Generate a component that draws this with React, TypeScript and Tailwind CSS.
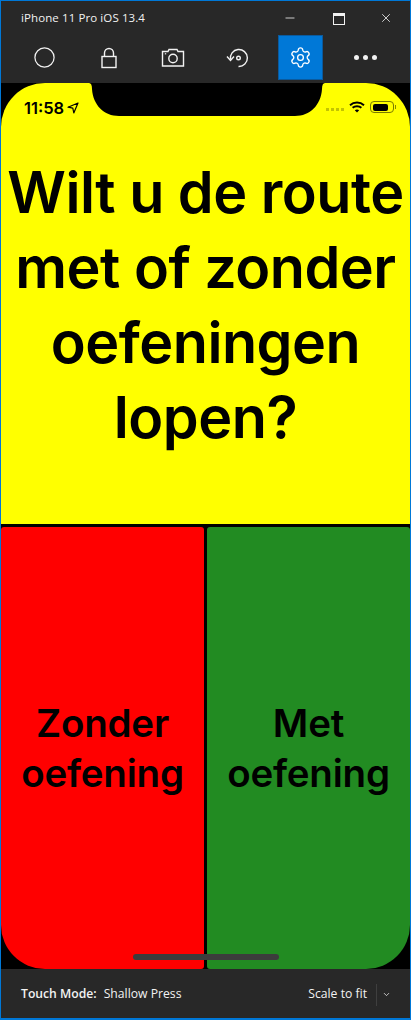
import React from 'react';
import { Circle, Settings, ChevronDown, Minus, X } from 'lucide-react';

const FONT = 'font-["Inter","Liberation_Sans",sans-serif]';

const ToolButton: React.FC<{ active?: boolean; children: React.ReactNode }> = ({ active, children }) => (
  <div className={`w-[45px] h-[45px] flex items-center justify-center ${active ? 'bg-[#0078d7] border border-[#0a5a9e]' : ''}`}>{children}</div>
);

const LockIcon = () => (
  <svg width="24" height="24" viewBox="0 0 24 24" fill="none" stroke="#f2f2f2" strokeWidth="1.4">
    <rect x="5" y="10.5" width="14" height="11" />
    <path d="M7.5 10.5 V7 A4.5 4.5 0 0 1 16.5 7 V10.5" />
  </svg>
);

const CameraIcon = () => (
  <svg width="24" height="24" viewBox="0 0 24 24" fill="none" stroke="#f2f2f2" strokeWidth="1.4">
    <path d="M1.5 5.5 H7 L8 3.5 H16 L17 5.5 H22.5 V20 H1.5 Z" />
    <circle cx="12" cy="12.5" r="4.2" />
    <rect x="3.8" y="7.2" width="1.4" height="1.2" fill="#f2f2f2" stroke="none" />
  </svg>
);

const RotateIcon = () => (
  <svg width="24" height="24" viewBox="0 0 24 24" fill="none" stroke="#f2f2f2" strokeWidth="1.4">
    <path d="M5.5 13.5 A8.5 8.5 0 1 1 13.5 20.5" />
    <path d="M2 10.5 L5.5 14.5 L9 10.5" />
    <circle cx="13.5" cy="12" r="1.8" />
  </svg>
);

const Wifi = () => (
  <svg width="16" height="12" viewBox="0 0 16 12" fill="none" stroke="#000" strokeWidth="2">
    <path d="M1 4.2 C5 0.6 11 0.6 15 4.2" />
    <path d="M3.6 6.8 C6 4.8 10 4.8 12.4 6.8" />
    <path d="M8 11.5 L5.8 9.2 C7 8.2 9 8.2 10.2 9.2 Z" fill="#000" stroke="none" />
  </svg>
);

const Arrow = () => (
  <svg width="12" height="12" viewBox="0 0 12 12" fill="none" stroke="#000" strokeWidth="1.2">
    <path d="M11 1 L1 5.2 L5.8 6.2 L6.8 11 Z" strokeLinejoin="round" />
  </svg>
);

const Battery = () => (
  <div className="flex items-center gap-px">
    <div className="w-[24px] h-[12px] rounded-[4px] border border-[#7a7a00] p-[1.5px]">
      <div className="w-[15px] h-full rounded-[2px] bg-black" />
    </div>
    <div className="w-px h-[4px] bg-[#8a8a00]" />
  </div>
);

export default function App() {
  return (
    <div className={`w-[411px] h-[1020px] flex flex-col bg-[#282828] border border-[#0078d7] border-b-2 ${FONT}`}>
      {/* title bar */}
      <div className="h-[34px] flex items-center shrink-0 pl-[20px] text-[#f2f2f2]">
        <span className='text-[11.5px] font-["Open_Sans",sans-serif] tracking-[0.1px]'>iPhone 11 Pro iOS 13.4</span>
        <div className="ml-auto flex items-center gap-[34px] pr-[17px]">
          <Minus className="w-[14px] h-[14px]" strokeWidth={1.4} />
          <div className="w-[12px] h-[12px] border border-[#f2f2f2] border-t-[3px] mt-[2px] ml-[2px]" />
          <X className="w-[14px] h-[14px]" strokeWidth={1.4} />
        </div>
      </div>

      {/* toolbar */}
      <div className="h-[48px] flex items-start gap-[19px] shrink-0 pl-[21px]">
        <ToolButton><Circle className="w-[23px] h-[23px] text-[#f2f2f2]" strokeWidth={1.3} /></ToolButton>
        <ToolButton><LockIcon /></ToolButton>
        <ToolButton><CameraIcon /></ToolButton>
        <ToolButton><RotateIcon /></ToolButton>
        <ToolButton active><Settings className="w-[23px] h-[23px] text-white" strokeWidth={1.4} /></ToolButton>
        <ToolButton>
          <div className="flex gap-[4px] ml-[2px]">
            <div className="w-[5px] h-[5px] rounded-full bg-[#f2f2f2]" />
            <div className="w-[5px] h-[5px] rounded-full bg-[#f2f2f2]" />
            <div className="w-[5px] h-[5px] rounded-full bg-[#f2f2f2]" />
          </div>
        </ToolButton>
      </div>

      {/* device screen */}
      <div className="relative h-[886px] shrink-0 bg-black flex flex-col">
        <div className="h-[441px] bg-[#ffff00] rounded-t-[44px] flex items-center justify-center pt-[2px]">
          <h1 className="text-[57.5px] leading-[75px] font-semibold text-black text-center tracking-[-0.5px] whitespace-nowrap">
            Wilt u de route<br />met of zonder<br />oefeningen<br />lopen?
          </h1>
        </div>
        <div className="flex-1 flex gap-[3px] pt-[3px]">
          <div className="w-[203px] bg-[#ff0000] rounded-[3px] rounded-bl-[44px] flex items-center justify-center">
            <span className="text-[38.5px] leading-[50px] font-semibold text-black text-center tracking-[-0.2px]">Zonder<br />oefening</span>
          </div>
          <div className="flex-1 bg-[#228b22] rounded-[3px] rounded-br-[44px] flex items-center justify-center">
            <span className="text-[38.5px] leading-[50px] font-semibold text-black text-center tracking-[-0.2px]">Met<br />oefening</span>
          </div>
        </div>

        {/* notch */}
        <svg className="absolute left-[88px] top-0" width="236" height="34" viewBox="0 0 236 34" fill="#000">
          <path d="M0 0 Q3 0 3 6 C4 22 15 33 30 33 H206 C221 33 232 22 233 6 Q233 0 236 0 Z" />
        </svg>

        {/* status bar */}
        <div className="absolute left-[23px] top-[15px] flex items-center gap-[3px]">
          <span className="text-[16.5px] leading-[20px] font-semibold text-black">11:58</span>
          <Arrow />
        </div>
        <div className="absolute right-[14px] top-[18px] flex items-center gap-[5px]">
          <div className="flex gap-[2px] mt-[5px]">
            <div className="w-[3px] h-[3px] bg-[#c4c400]" />
            <div className="w-[3px] h-[3px] bg-[#c4c400]" />
            <div className="w-[3px] h-[3px] bg-[#c4c400]" />
            <div className="w-[3px] h-[3px] bg-[#c4c400]" />
          </div>
          <Wifi />
          <Battery />
        </div>

        {/* home indicator */}
        <div className="absolute left-[132px] top-[871px] w-[146px] h-[6px] rounded-full bg-[#3c3c3c]" />
      </div>

      {/* bottom bar */}
      <div className='flex-1 flex items-center pl-[20px] pt-[2px] text-[#f2f2f2] text-[12.2px] font-["Open_Sans",sans-serif]'>
        <span className="font-semibold">Touch Mode:</span>
        <span className="ml-[7px]">Shallow Press</span>
        <span className="ml-auto">Scale to fit</span>
        <div className="ml-[9px] h-[22px] border-l border-[#3f3f3f] pl-[5px] pr-[19px] flex items-center">
          <ChevronDown className="w-[9px] h-[9px]" strokeWidth={2} />
        </div>
      </div>
    </div>
  );
}
